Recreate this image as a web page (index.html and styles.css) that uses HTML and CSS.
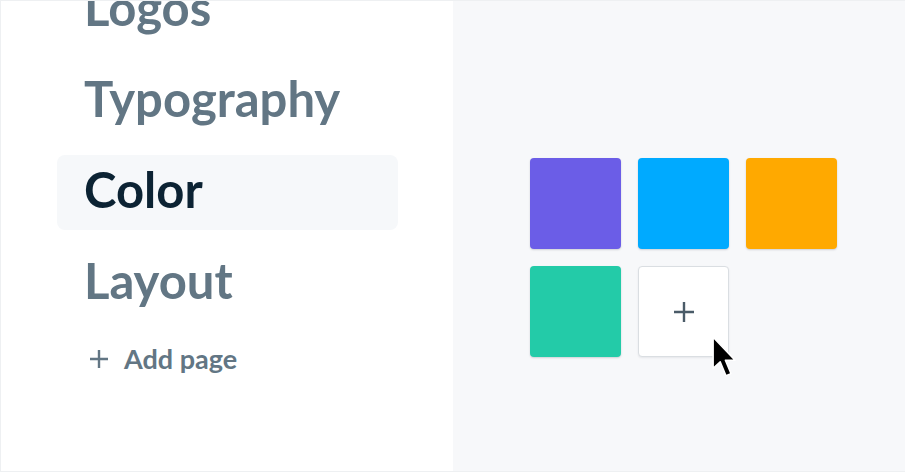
FILE: index.html
```html
<!DOCTYPE html>
<html>
<head>
<meta charset="utf-8">
<link rel="stylesheet" href="styles.css">
</head>
<body>
<div class="frame">
  <aside class="sidebar">
    <ul class="pages">
      <li class="page">Logos</li>
      <li class="page">Typography</li>
      <li class="page active">Color</li>
      <li class="page">Layout</li>
    </ul>
    <div class="add-page">
      <svg class="add-icon" width="20" height="20" viewBox="0 0 20 20"><path d="M10 1v18M1 10h18" stroke="currentColor" stroke-width="2.4" fill="none"/></svg>
      <span>Add page</span>
    </div>
  </aside>
  <main class="canvas">
    <div class="swatches">
      <div class="swatch purple"></div>
      <div class="swatch blue"></div>
      <div class="swatch orange"></div>
      <div class="swatch teal"></div>
      <div class="swatch add">
        <svg width="22" height="22" viewBox="0 0 22 22"><path d="M11 1v20M1 11h20" stroke="#4a5b68" stroke-width="2.4" fill="none"/></svg>
        <svg class="cursor" width="30" height="45" viewBox="0 0 14 21"><path d="M1 1 L1 15.5 L4.3 12.5 L7 19 L9.3 18 L6.7 11.8 L11.2 11.8 Z" fill="#000" stroke="#fff" stroke-width="0.7" stroke-linejoin="round"/></svg>
      </div>
    </div>
  </main>
</div>
</body>
</html>
```
FILE: styles.css
```css
html, body {
  margin: 0;
  padding: 0;
  background: #ffffff;
}
body {
  width: 905px;
  height: 472px;
  overflow: hidden;
  font-family: "Lato", "Liberation Sans", sans-serif;
}
.frame {
  display: flex;
  width: 905px;
  height: 472px;
  box-sizing: border-box;
  border-top: 1px solid #eef0f2;
  border-left: 1px solid #eef0f2;
  border-bottom: 1px solid #eef0f2;
}
.sidebar {
  width: 452px;
  flex: none;
  background: #ffffff;
  padding-left: 56px;
  box-sizing: border-box;
  overflow: hidden;
}
.pages {
  list-style: none;
  margin: -28px 0 0 0;
  padding: 0;
  display: flex;
  flex-direction: column;
  gap: 16px;
}
.page {
  width: 341px;
  height: 75px;
  box-sizing: border-box;
  padding-left: 27px;
  padding-bottom: 6px;
  border-radius: 8px;
  font-size: 49px;
  font-weight: 700;
  line-height: 69px;
  color: #627684;
}
.page.active {
  background: #f6f8fa;
  color: #0c2333;
}
.add-page {
  display: flex;
  align-items: center;
  gap: 15px;
  margin-top: 21px;
  padding-left: 32px;
  color: #627684;
  font-size: 27px;
  font-weight: 700;
  line-height: 34px;
}
.add-icon {
  flex: none;
}
.canvas {
  flex: 1;
  background: #f7f8fa;
  display: flex;
  justify-content: flex-start;
  padding-left: 77px;
  padding-top: 157px;
}
.swatches {
  display: grid;
  grid-template-columns: repeat(3, 91px);
  grid-auto-rows: 91px;
  gap: 17px;
  align-content: start;
}
.swatch {
  border-radius: 4px;
  box-shadow: 0 1px 2px rgba(20, 30, 50, 0.18);
}
.purple { background: #6b5de7; }
.blue { background: #00aaff; }
.orange { background: #ffa900; }
.teal { background: #23cba8; }
.swatch.add {
  position: relative;
  background: #ffffff;
  box-sizing: border-box;
  border: 1px solid #dadee2;
  box-shadow: 0 1px 2px rgba(20, 30, 50, 0.08);
  display: flex;
  align-items: center;
  justify-content: center;
}
.cursor {
  position: absolute;
  left: 72px;
  top: 68px;
}
```
